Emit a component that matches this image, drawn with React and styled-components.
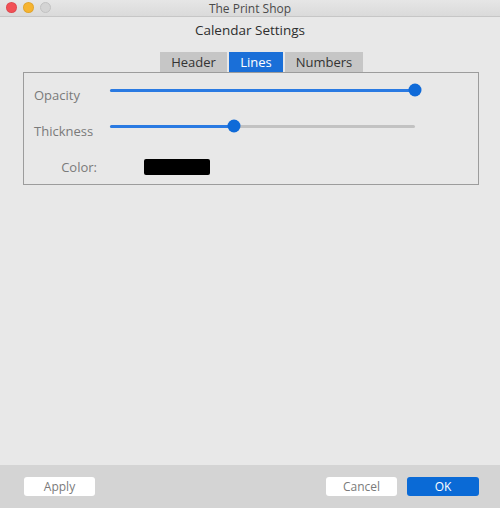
import styled, { createGlobalStyle } from "styled-components";

const GlobalStyle = createGlobalStyle`
    html, body {
        margin: 0;
        padding: 0;
        background: #e8e8e8;
    }
    body {
        font-family: "Open Sans", "Liberation Sans", sans-serif;
    }
`;

const tabs = [
    { name: "Header", width: 67 },
    { name: "Lines", width: 54 },
    { name: "Numbers", width: 78 },
];

export default function App() {
    return (
        <Window>
            <GlobalStyle />
            <TitleBar>
                <Lights>
                    <Light color="#f25056" />
                    <Light color="#f6b430" />
                    <Light color="#d4d4d4" border="#c2c2c2" />
                </Lights>
                <Title>The Print Shop</Title>
            </TitleBar>
            <Heading>Calendar Settings</Heading>
            <Content>
                <TabRow>
                    {tabs.map((t) => (
                        <Tab key={t.name} w={t.width} active={t.name === "Lines"}>
                            {t.name}
                        </Tab>
                    ))}
                </TabRow>
                <Panel>
                    <Row>
                        <Label>Opacity</Label>
                        <Slider value={100} />
                    </Row>
                    <Row>
                        <Label>Thickness</Label>
                        <Slider value={40.8} />
                    </Row>
                    <ColorRow>
                        <ColorLabel>Color:</ColorLabel>
                        <Swatch color="#000" />
                    </ColorRow>
                </Panel>
            </Content>
            <Footer>
                <Button>Apply</Button>
                <Spacer />
                <Button>Cancel</Button>
                <Button primary>OK</Button>
            </Footer>
        </Window>
    );
}

function Slider({ value }) {
    return (
        <Track>
            <Fill style={{ width: `${value}%` }} />
            <Thumb style={{ left: `${value}%` }} />
        </Track>
    );
}

const Window = styled.div`
    width: 500px;
    height: 508px;
    display: flex;
    flex-direction: column;
    background: #e8e8e8;
    overflow: hidden;
`;

const TitleBar = styled.div`
    position: relative;
    height: 16px;
    display: flex;
    align-items: center;
    justify-content: center;
    background: linear-gradient(#e6e6e6, #dadada);
    border-bottom: 1px solid #c6c6c6;
`;

const Lights = styled.div`
    position: absolute;
    left: 6px;
    top: 2px;
    display: flex;
    gap: 6px;
`;

const Light = styled.span`
    width: 11px;
    height: 11px;
    border-radius: 50%;
    background: ${(p) => p.color};
    box-sizing: border-box;
    border: 1px solid ${(p) => p.border || "rgba(0,0,0,0.08)"};
`;

const Title = styled.div`
    font-size: 12px;
    color: #4a4a4a;
`;

const Heading = styled.div`
    height: 21px;
    padding-top: 2px;
    display: flex;
    align-items: center;
    justify-content: center;
    font-size: 13.5px;
    color: #2e2e2e;
`;

const Content = styled.div`
    flex: 1;
    padding: 12px 20px 0 23px;
`;

const TabRow = styled.div`
    display: flex;
    gap: 2px;
    padding-left: 137px;
`;

const Tab = styled.div`
    width: ${(p) => p.w}px;
    height: 20px;
    display: flex;
    align-items: center;
    justify-content: center;
    font-size: 13px;
    color: ${(p) => (p.active ? "#fff" : "#333")};
    background: ${(p) => (p.active ? "#1a6fd8" : "#c6c6c6")};
`;

const Panel = styled.div`
    width: 456px;
    height: 113px;
    box-sizing: border-box;
    border: 1px solid #9c9c9c;
    padding: 4px 0 0 10px;
`;

const Row = styled.div`
    height: 36px;
    display: grid;
    grid-template-columns: 76px 305px;
    align-items: center;
`;

const Label = styled.div`
    font-size: 13px;
    color: #7a7a7a;
`;

const Track = styled.div`
    position: relative;
    height: 3px;
    margin-bottom: 10px;
    background: #c2c2c2;
    border-radius: 2px;
`;

const Fill = styled.div`
    height: 100%;
    background: #2a7ae2;
    border-radius: 2px;
`;

const Thumb = styled.div`
    position: absolute;
    top: 50%;
    width: 13px;
    height: 13px;
    border-radius: 50%;
    background: #0f6ad8;
    transform: translate(-50%, -50%);
`;

const ColorRow = styled.div`
    height: 36px;
    display: flex;
    align-items: center;
    gap: 47px;
`;

const ColorLabel = styled.div`
    width: 63px;
    text-align: right;
    font-size: 13px;
    color: #7a7a7a;
`;

const Swatch = styled.div`
    width: 66px;
    height: 16px;
    border-radius: 2px;
    background: ${(p) => p.color};
`;

const Footer = styled.div`
    height: 43px;
    display: flex;
    align-items: center;
    gap: 10px;
    padding: 0 21px 0 24px;
    background: #d4d4d4;
`;

const Spacer = styled.div`
    flex: 1;
`;

const Button = styled.div`
    height: 19px;
    display: flex;
    align-items: center;
    justify-content: center;
    border-radius: 3px;
    font-size: 12px;
    color: ${(p) => (p.primary ? "#fff" : "#7a7a7a")};
    background: ${(p) => (p.primary ? "#0a6ad6" : "#fff")};
    width: ${(p) => (p.primary ? "72px" : "71px")};
`;
